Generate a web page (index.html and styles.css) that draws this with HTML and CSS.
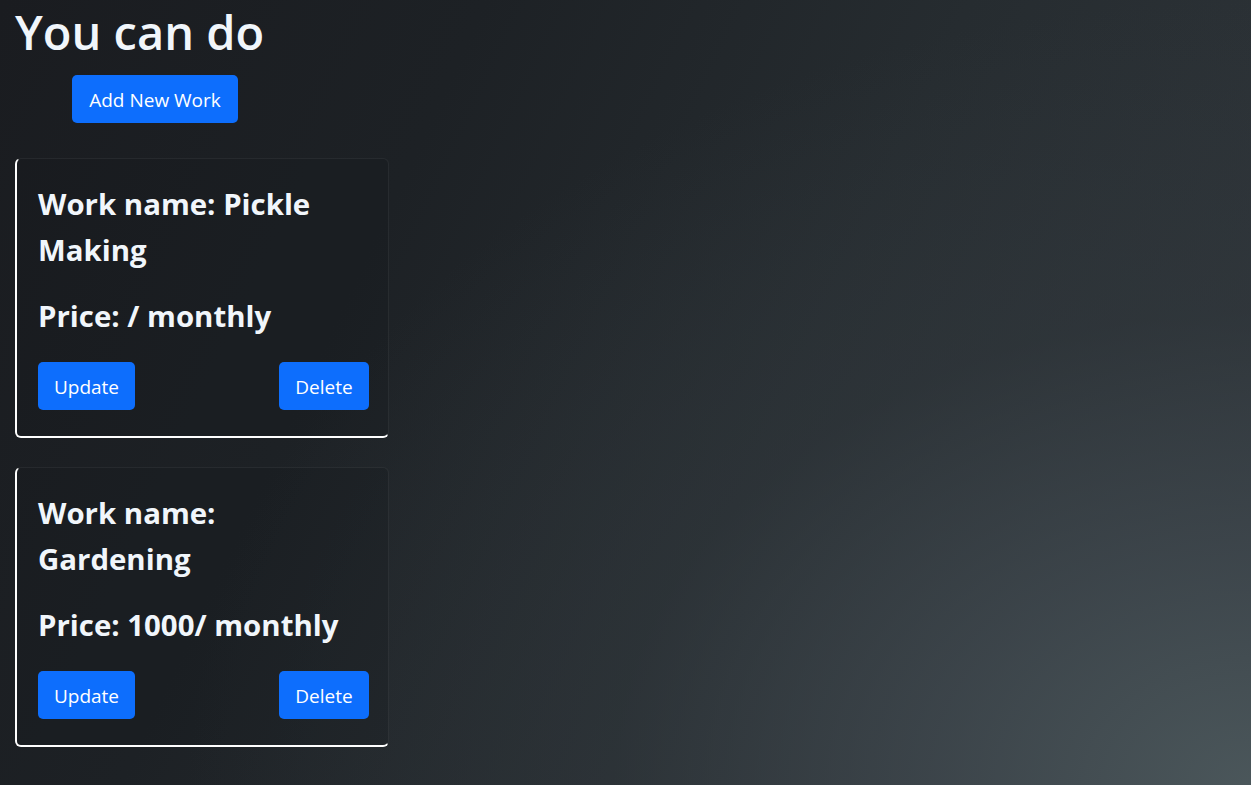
FILE: index.html
```html
<!DOCTYPE html>
<html lang="en">
<head>
<meta charset="utf-8">
<title>You can do</title>
<link rel="stylesheet" href="styles.css">
</head>
<body>
<main class="page">
  <h1 class="title">You can do</h1>
  <div class="actions">
    <button class="btn btn-add">Add New Work</button>
  </div>
  <section class="works">
    <article class="card">
      <h3 class="card-name">Work name: Pickle Making</h3>
      <h3 class="card-price">Price: / monthly</h3>
      <div class="card-buttons">
        <button class="btn">Update</button>
        <button class="btn">Delete</button>
      </div>
    </article>
    <article class="card">
      <h3 class="card-name">Work name: Gardening</h3>
      <h3 class="card-price">Price: 1000/ monthly</h3>
      <div class="card-buttons">
        <button class="btn">Update</button>
        <button class="btn">Delete</button>
      </div>
    </article>
  </section>
</main>
</body>
</html>
```
FILE: styles.css
```css
html, body {
  margin: 0;
  padding: 0;
  height: 100%;
}
body {
  font-family: "Open Sans", "Noto Sans", sans-serif;
  color: #f1f6fb;
  background-color: #22272b;
  background-image:
    radial-gradient(ellipse 85% 100% at 100% 100%, rgba(76, 88, 92, 0.95) 0%, rgba(64, 73, 79, 0.8) 30%, rgba(50, 57, 62, 0.5) 60%, rgba(30, 34, 38, 0) 100%),
    linear-gradient(115deg, #1a1c20 0%, #1d2125 30%, #262c30 60%, #30363b 100%);
  overflow: hidden;
}
.page {
  padding: 0 0 0 15px;
}
.title {
  margin: 0;
  padding-top: 2px;
  font-size: 47px;
  font-weight: 600;
  line-height: 60px;
}
.actions {
  padding: 13px 0 35px 57px;
}
.btn {
  font-family: inherit;
  font-size: 19px;
  line-height: 28px;
  color: #fff;
  background: #0d6efd;
  border: 0;
  border-radius: 5px;
  padding: 11px 16px 9px;
  cursor: pointer;
}
.btn-add {
  width: 166px;
  padding: 11px 0 9px;
}
.works {
  display: flex;
  flex-direction: column;
  gap: 29px;
  width: 374px;
}
.card {
  box-sizing: border-box;
  width: 374px;
  border: 1px solid rgba(255, 255, 255, 0.06);
  border-left: 2px solid #fff;
  border-bottom: 2px solid #fff;
  border-radius: 6px;
  background: rgba(20, 22, 26, 0.25);
  padding: 22px 19px 26px 21px;
}
.card-name, .card-price {
  margin: 0;
  font-size: 29.4px;
  font-weight: 700;
  line-height: 46px;
}
.card-name {
  margin-bottom: 20px;
}
.card-price {
  margin-bottom: 23px;
}
.card-buttons {
  display: flex;
  justify-content: space-between;
}
.card-buttons .btn:first-child {
  width: 97px;
  padding: 11px 0 9px;
}
.card-buttons .btn:last-child {
  width: 90px;
  padding: 11px 0 9px;
}
```
